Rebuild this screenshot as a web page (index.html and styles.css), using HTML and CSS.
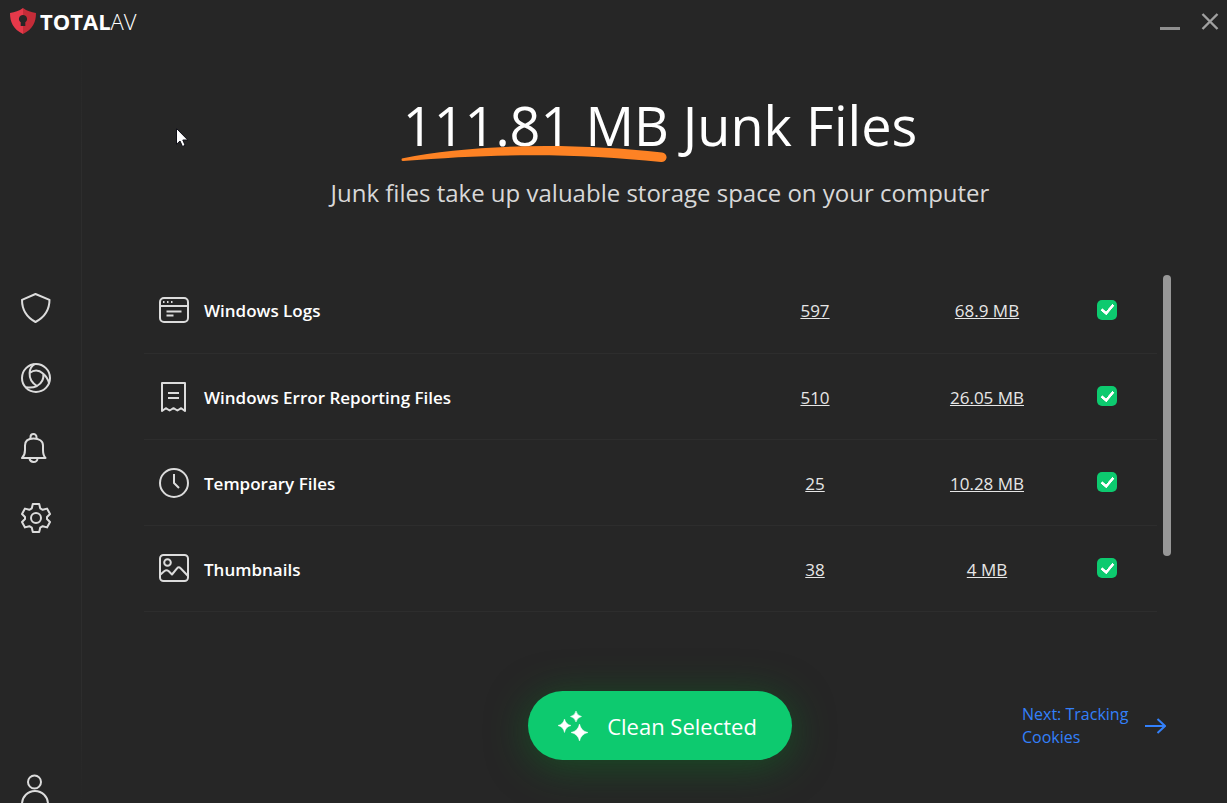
FILE: index.html
```html
<!DOCTYPE html>
<html lang="en">
<head>
<meta charset="utf-8">
<title>TotalAV</title>
<meta name="viewport" content="width=device-width, initial-scale=1">
<link rel="stylesheet" href="styles.css">
</head>
<body class="app">
<header class="titlebar">
  <div class="brand">
    <svg class="brand-mark" width="26" height="26" viewBox="0 0 26 26" aria-hidden="true">
      <path fill="#e6394a" d="M13 0C9 3 5 4 0 5c0 9 3 16 13 21z"/>
      <path fill="#c42c38" d="M13 0c4 3 8 4 13 5 0 9-3 16-13 21z"/>
      <path fill="#262626" d="M13 7a4 4 0 0 0-2.300 7.300V18h4.600v-3.700A4 4 0 0 0 13 7z"/>
    </svg>
    <span class="brand-name"><strong>TOTAL</strong><span class="brand-light">AV</span></span>
  </div>
  <div class="window-buttons">
    <button class="window-button" type="button" aria-label="Minimize">
      <svg width="20" height="20" viewBox="0 0 20 20"><path d="M0 17.500h20" stroke="#8f8f8f" stroke-width="3"/></svg>
    </button>
    <button class="window-button" type="button" aria-label="Close">
      <svg width="20" height="20" viewBox="0 0 20 20"><path d="M2.500 3l15 15M17.500 3l-15 15" stroke="#a0a0a0" stroke-width="2.400"/></svg>
    </button>
  </div>
</header>
<div class="workspace">
  <nav class="sidebar" aria-label="Main">
    <div class="sidebar-main">
      <a class="sidebar-link" href="#protection" aria-label="Protection">
        <svg class="icon" width="30" height="30" viewBox="0 0 30 30"><path d="M14.500 1L28.500 6.800C28.500 17 24 24 14.500 29 5 24 1 17 1 6.800z"/></svg>
      </a>
      <a class="sidebar-link" href="#browser" aria-label="Browser">
        <svg class="icon" width="30" height="30" viewBox="0 0 30 30"><circle cx="15" cy="15" r="14"/><path d="M13.500 1.200C10.500 3 8.800 6 8.600 10c-.3 6 2.300 10 7.400 13M8.600 10C13 6.800 18 7 22 10.500c3 2.500 5 5.500 6 9.500M22.300 10.700c.7 5.300-1.800 9.800-6.300 12.300-3.500 1.700-7 2-11 1.200"/></svg>
      </a>
      <a class="sidebar-link" href="#alerts" aria-label="Alerts">
        <svg class="icon" width="30" height="30" viewBox="0 0 30 30"><path d="M9.500 5.500V4a3 3 0 0 1 6 0v1.500M1 25h23.500c-2-2-2.500-4-2.500-8v-4.500C22 8 18 5.500 12.500 5.500S4 8 4 12.500V17c0 4-1 6-3 8zM8.500 25.500c.5 2.300 2 3.500 4 3.500s3.800-1.200 4-3.500"/></svg>
      </a>
      <a class="sidebar-link" href="#settings" aria-label="Settings">
        <svg class="icon" width="30" height="30" viewBox="0 0 30 30"><path d="M11.800 1h6.400l1 4.300 2.500 1.500 4.300-1.200L29 11l-3 3v2l3 3-3 5.400-4.300-1.200-2.500 1.500-1 4.300h-6.400l-1-4.300-2.500-1.500L4 24.400 1 19l3-3v-2l-3-3 3-5.400 4.300 1.200 2.500-1.500z"/><circle cx="15" cy="15" r="5"/></svg>
      </a>
    </div>
    <a class="sidebar-link account" href="#account" aria-label="Account">
      <svg class="icon" width="30" height="30" viewBox="0 0 30 30"><circle cx="13.500" cy="8" r="6.500"/><path d="M1 30a13 13 0 0 1 26 0z"/></svg>
    </a>
  </nav>
  <main class="content">
    <h1 class="headline"><span class="amount">111.81 MB<svg class="swoosh" viewBox="0 0 264 18" preserveAspectRatio="none" aria-hidden="true"><path d="M2 13C70-2 170-4 259 7a4.800 4.800 0 0 1-1 10C180 8 100 7 2 16a1.500 1.500 0 0 1 0-3z" fill="#fd8224"/></svg></span> Junk Files</h1>
    <p class="subtitle">Junk files take up valuable storage space on your computer</p>
    <div class="results">
      <table class="junk-table">
        <colgroup><col><col class="col-count"><col class="col-size"><col class="col-check"></colgroup>
        <tbody>
          <tr>
            <th scope="row"><label class="junk-name" for="logs">
              <svg class="icon" width="30" height="30" viewBox="0 0 30 30"><rect x="1" y="2" width="28" height="24" rx="4"/><path d="M1 10h28M7.500 15.500h15M7.500 19.500h7"/><path d="M4 6h1.500M8 6h1.500M12 6h1.500"/></svg>
              Windows Logs</label></th>
            <td><a href="#logs-files">597</a></td><td><a href="#logs-size">68.9 MB</a></td>
            <td><input class="check" type="checkbox" id="logs" checked></td>
          </tr>
          <tr>
            <th scope="row"><label class="junk-name" for="errors">
              <svg class="icon" width="30" height="30" viewBox="0 0 30 30"><path d="M3 29V1h23v28l-3.800-2.800-3.800 2.300-3.900-2.300-3.900 2.300-3.800-2.300zM9 11h11M9 16h11"/></svg>
              Windows Error Reporting Files</label></th>
            <td><a href="#errors-files">510</a></td><td><a href="#errors-size">26.05 MB</a></td>
            <td><input class="check" type="checkbox" id="errors" checked></td>
          </tr>
          <tr>
            <th scope="row"><label class="junk-name" for="temp">
              <svg class="icon" width="30" height="30" viewBox="0 0 30 30"><circle cx="15" cy="15" r="14"/><path d="M15 6v9l5 5"/></svg>
              Temporary Files</label></th>
            <td><a href="#temp-files">25</a></td><td><a href="#temp-size">10.28 MB</a></td>
            <td><input class="check" type="checkbox" id="temp" checked></td>
          </tr>
          <tr>
            <th scope="row"><label class="junk-name" for="thumbs">
              <svg class="icon" width="30" height="30" viewBox="0 0 30 30"><rect x="1" y="1" width="28" height="26" rx="3.500"/><circle cx="8.500" cy="8.500" r="3.300"/><path d="M1.500 20.500L5.500 17q2-1.500 4 0l3.500 3.500L18 14.300q1.800-2 3.600 0L29 22"/></svg>
              Thumbnails</label></th>
            <td><a href="#thumbs-files">38</a></td><td><a href="#thumbs-size">4 MB</a></td>
            <td><input class="check" type="checkbox" id="thumbs" checked></td>
          </tr>
        </tbody>
      </table>
      <div class="scroll-track" aria-hidden="true"><div class="scroll-thumb"></div></div>
    </div>
    <div class="actions">
      <button class="clean-button" type="button">
        <svg width="30" height="30" viewBox="0 0 30 30" fill="#fff" aria-hidden="true"><path d="M18 0q1 4.500 5.500 5.500Q19 6.500 18 11q-1-4.500-5.500-5.500Q17 4.500 18 0zM6.500 8q1.200 5.300 6.500 6.500-5.300 1.200-6.500 7Q5.300 15.700 0 14.500 5.300 13.300 6.500 8zM21.500 13q1.500 7 8.500 8.500-7 1.500-8.500 8.500-1.500-7-8.500-8.500 7-1.500 8.500-8.500z" stroke="#fff" stroke-width=".5"/></svg>
        Clean Selected
      </button>
      <a class="next-link" href="#cookies"><span class="next-text">Next: Tracking Cookies</span>
        <svg width="22" height="16" viewBox="0 0 22 16" fill="none" stroke="#3380fa" stroke-width="2" aria-hidden="true"><path d="M1 8h20M13.500 1l7.500 7-7.500 7"/></svg>
      </a>
    </div>
  </main>
</div>
<svg class="pointer" width="13" height="20" viewBox="0 0 13 20" aria-hidden="true"><path d="M.5.5v15.800L4 13l2.500 5.500 2.600-1.200L6.800 12h5z" fill="#fff" stroke="#101018"/></svg>
</body>
</html>
```
FILE: styles.css
```css
*,
*::before {
  box-sizing: border-box;
}

.app {
  display: flex;
  flex-direction: column;
  height: 100vh;
  margin: 0;
  overflow: hidden;
  background: #262626;
  color: #fff;
  font-family: "Open Sans", "Noto Sans", sans-serif;
  font-size: 18px;
}

.app a {
  color: inherit;
}

.titlebar {
  display: flex;
  flex: none;
  justify-content: space-between;
  align-items: center;
  height: 43px;
  padding: 0 7px 1px 10px;
}

.brand {
  display: flex;
  align-items: center;
  gap: 4px;
}

.brand-name {
  font-size: 22px;
  line-height: 26px;
}

.brand-light {
  font-weight: 300;
}

.window-buttons {
  display: flex;
  gap: 20px;
}

.window-button {
  display: flex;
  width: 20px;
  height: 20px;
  padding: 0;
  border: 0;
  background: none;
}

.workspace {
  display: flex;
  flex: 1;
  min-height: 0;
}

.sidebar {
  display: flex;
  flex: none;
  flex-direction: column;
  justify-content: space-between;
  width: 82px;
  padding: 250px 0 0 21px;
  border-right: 1px solid;
  border-image: linear-gradient(#262626, #2d2d2d 15%, #2d2d2d 85%, #262626) 1;
}

.sidebar-main {
  display: flex;
  flex-direction: column;
  gap: 40px;
}

.sidebar-link {
  display: flex;
}

.account {
  height: 29px;
  overflow: hidden;
}

.icon {
  flex: none;
  fill: none;
  stroke: #dcdcdc;
  stroke-width: 2;
  stroke-linejoin: round;
}

.content {
  display: flex;
  flex: 1;
  flex-direction: column;
  padding: 43px 51px 43px 62px;
}

.headline {
  margin: 0;
  font-size: 54px;
  font-weight: 400;
  line-height: 78px;
  text-align: center;
}

.amount {
  position: relative;
  display: inline-block;
}

.swoosh {
  position: absolute;
  right: 2px;
  bottom: 1px;
  z-index: 1;
  width: 100%;
  height: 17px;
}

.subtitle {
  margin: 11px 0 56px;
  color: #d8d8d8;
  font-size: 24px;
  line-height: 36px;
  text-align: center;
}

.results {
  display: flex;
  gap: 6px;
  padding-right: 5px;
}

.junk-table {
  flex: 1;
  border-collapse: collapse;
  table-layout: fixed;
}

.col-count {
  width: 204px;
}

.col-size {
  width: 140px;
}

.col-check {
  width: 100px;
}

.junk-table th,
.junk-table td {
  height: 86px;
  padding: 2px 0 0;
  border-bottom: 1px solid #2d2d2d;
  text-align: center;
}

.junk-table td {
  color: #e6e6e6;
  font-size: 17px;
}

.junk-table td:last-child {
  padding: 0;
}

.junk-name {
  display: flex;
  align-items: center;
  gap: 15px;
  padding-left: 15px;
  font-size: 17px;
  font-weight: 600;
}

.check {
  display: grid;
  place-items: center;
  width: 20px;
  height: 20px;
  margin: 0 auto;
  border-radius: 5px;
  background: #0dca6f;
  appearance: none;
}

.check:checked::before {
  width: 13px;
  height: 8px;
  margin-bottom: 3px;
  border: solid #fff;
  border-width: 0 0 3px 3px;
  border-radius: 1px;
  content: "";
  transform: rotate(-50deg);
}

.scroll-track {
  width: 8px;
  padding-top: 8px;
}

.scroll-thumb {
  height: 281px;
  border-radius: 4px;
  background: #979797;
}

.actions {
  display: grid;
  grid-template-columns: 1fr auto 1fr;
  align-items: center;
  margin-top: auto;
}

.clean-button {
  display: flex;
  grid-column: 2;
  align-items: center;
  gap: 19px;
  height: 69px;
  padding: 0 35px 0 30px;
  border: 0;
  border-radius: 35px;
  background: #0dca6f;
  box-shadow: 0 6px 40px rgba(10, 120, 35, 0.5);
  color: #fff;
  font: inherit;
  font-size: 22px;
}

.next-link {
  display: flex;
  align-items: center;
  justify-self: end;
  gap: 8px;
  padding-right: 10px;
}

.app .next-link {
  color: #3380fa;
  text-decoration: none;
}

.next-text {
  width: 114px;
  font-size: 16px;
  line-height: 23px;
}

.pointer {
  position: absolute;
  left: 176px;
  top: 128px;
}
```
